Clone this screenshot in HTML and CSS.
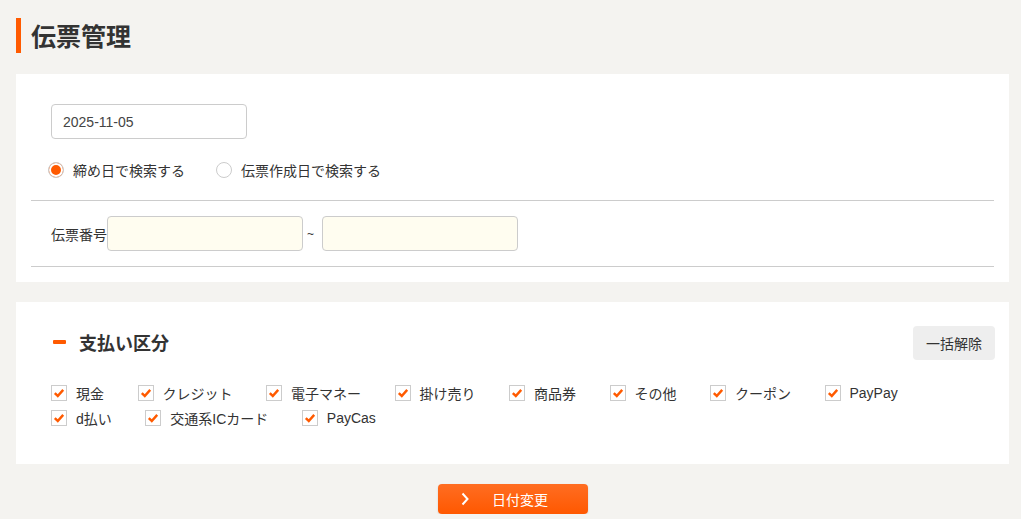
FILE: index.html
```html
<!DOCTYPE html>
<html lang="ja">
<head>
<meta charset="utf-8">
<title>伝票管理</title>
<link rel="stylesheet" href="styles.css">
</head>
<body>
<div class="page">
  <h1 class="page-title">伝票管理</h1>

  <section class="panel panel-search">
    <div class="block">
      <input class="text-input date-input" type="text" value="2025-11-05">
      <div class="radio-row">
        <label class="radio"><span class="radio-mark checked"></span>締め日で検索する</label>
        <label class="radio"><span class="radio-mark"></span>伝票作成日で検索する</label>
      </div>
    </div>
    <div class="divider"></div>
    <div class="block range-row">
      <span class="range-label">伝票番号</span>
      <input class="text-input range-input" type="text">
      <span class="tilde">~</span>
      <input class="text-input range-input" type="text">
    </div>
    <div class="divider"></div>
  </section>

  <section class="panel panel-pay">
    <div class="pay-head">
      <h2 class="section-title"><span class="minus"></span>支払い区分</h2>
      <button class="clear-btn" type="button">一括解除</button>
    </div>
    <div class="check-list">
      <label class="check"><span class="box"><svg viewBox="0 0 16 16"><path d="M3.2 8.2 L6.6 11.4 L12.8 4.4" fill="none" stroke="#ff5a00" stroke-width="2.8"/></svg></span>現金</label>
      <label class="check"><span class="box"><svg viewBox="0 0 16 16"><path d="M3.2 8.2 L6.6 11.4 L12.8 4.4" fill="none" stroke="#ff5a00" stroke-width="2.8"/></svg></span>クレジット</label>
      <label class="check"><span class="box"><svg viewBox="0 0 16 16"><path d="M3.2 8.2 L6.6 11.4 L12.8 4.4" fill="none" stroke="#ff5a00" stroke-width="2.8"/></svg></span>電子マネー</label>
      <label class="check"><span class="box"><svg viewBox="0 0 16 16"><path d="M3.2 8.2 L6.6 11.4 L12.8 4.4" fill="none" stroke="#ff5a00" stroke-width="2.8"/></svg></span>掛け売り</label>
      <label class="check"><span class="box"><svg viewBox="0 0 16 16"><path d="M3.2 8.2 L6.6 11.4 L12.8 4.4" fill="none" stroke="#ff5a00" stroke-width="2.8"/></svg></span>商品券</label>
      <label class="check"><span class="box"><svg viewBox="0 0 16 16"><path d="M3.2 8.2 L6.6 11.4 L12.8 4.4" fill="none" stroke="#ff5a00" stroke-width="2.8"/></svg></span>その他</label>
      <label class="check"><span class="box"><svg viewBox="0 0 16 16"><path d="M3.2 8.2 L6.6 11.4 L12.8 4.4" fill="none" stroke="#ff5a00" stroke-width="2.8"/></svg></span>クーポン</label>
      <label class="check"><span class="box"><svg viewBox="0 0 16 16"><path d="M3.2 8.2 L6.6 11.4 L12.8 4.4" fill="none" stroke="#ff5a00" stroke-width="2.8"/></svg></span>PayPay</label>
      <label class="check"><span class="box"><svg viewBox="0 0 16 16"><path d="M3.2 8.2 L6.6 11.4 L12.8 4.4" fill="none" stroke="#ff5a00" stroke-width="2.8"/></svg></span>d払い</label>
      <label class="check"><span class="box"><svg viewBox="0 0 16 16"><path d="M3.2 8.2 L6.6 11.4 L12.8 4.4" fill="none" stroke="#ff5a00" stroke-width="2.8"/></svg></span>交通系ICカード</label>
      <label class="check"><span class="box"><svg viewBox="0 0 16 16"><path d="M3.2 8.2 L6.6 11.4 L12.8 4.4" fill="none" stroke="#ff5a00" stroke-width="2.8"/></svg></span>PayCas</label>
    </div>
  </section>

  <div class="actions">
    <button class="primary-btn" type="button">
      <svg class="chev" viewBox="0 0 10 14"><path d="M2.5 1.5 L7.5 7 L2.5 12.5" fill="none" stroke="#fff" stroke-width="2"/></svg>
      <span>日付変更</span>
    </button>
  </div>
</div>
</body>
</html>
```

FILE: styles.css
```css
* { box-sizing: border-box; }
html, body { margin: 0; padding: 0; }
body {
  background: #f4f3f0;
  font-family: "Liberation Sans", "Noto Sans CJK JP", sans-serif;
  font-size: 14px;
  color: #333;
  overflow: hidden;
}
.page {
  padding: 18px 12px 0 16px;
}
.page-title {
  margin: 0 0 21px;
  height: 35px;
  line-height: 35px;
  border-left: 5px solid #ff5a00;
  padding-left: 10px;
  font-family: "Noto Sans CJK JP", sans-serif;
  font-size: 25px;
  font-weight: 700;
  color: #333;
}
.panel {
  background: #fff;
}
.panel-search {
  padding: 30px 15px 15px;
}
.block {
  padding-left: 20px;
}
.text-input {
  display: block;
  height: 35px;
  border: 1px solid #ccc;
  border-radius: 4px;
  font-family: "Liberation Sans", "Noto Sans CJK JP", sans-serif;
  font-size: 14px;
  color: #444;
  padding: 0 11px;
  outline: none;
}
.date-input {
  width: 196px;
  background: #fff;
}
.radio-row {
  display: flex;
  gap: 31px;
  margin: 22px 0 0 -3px;
  height: 17px;
  align-items: center;
}
.radio {
  display: flex;
  align-items: center;
  gap: 9px;
  font-family: "Noto Sans CJK JP", sans-serif;
  font-size: 14px;
  color: #333;
}
.radio-mark {
  width: 16px;
  height: 16px;
  border-radius: 50%;
  border: 1px solid #ccc;
  background: #fff;
}
.radio-mark.checked {
  background: #ff5a00;
  box-shadow: inset 0 0 0 2px #fff;
  border-color: #ccc;
}
.divider {
  height: 1px;
  background: #ccc;
  margin-top: 22px;
}
.range-row {
  display: flex;
  align-items: center;
  padding-top: 15px;
  padding-bottom: 15px;
}
.range-row + .divider { margin-top: 0; }
.range-label {
  font-family: "Noto Sans CJK JP", sans-serif;
  color: #333;
}
.range-input {
  width: 196px;
  background: #fffdf0;
}
.tilde {
  width: 19px;
  padding-left: 4px;
  font-size: 12px;
}
.panel-pay {
  margin-top: 20px;
  padding: 24px 14px 34px 35px;
}
.pay-head {
  display: flex;
  justify-content: space-between;
  align-items: center;
  height: 34px;
}
.section-title {
  margin: 0 0 3px;
  display: flex;
  align-items: center;
  font-family: "Noto Sans CJK JP", sans-serif;
  font-size: 18px;
  line-height: 24px;
  font-weight: 700;
  color: #333;
}
.minus {
  width: 13px;
  height: 4px;
  background: #ff5a00;
  border-radius: 1px;
  margin: 0 13px 0 2px;
}
.clear-btn {
  width: 82px;
  height: 34px;
  border: none;
  border-radius: 4px;
  background: #eeeeee;
  font-family: "Noto Sans CJK JP", sans-serif;
  font-size: 14px;
  color: #333;
  padding: 0;
}
.check-list {
  display: flex;
  flex-wrap: wrap;
  margin-top: 20px;
  padding-right: 12px;
  column-gap: 33.5px;
}
.check {
  display: flex;
  align-items: center;
  height: 25px;
  gap: 9px;
  font-family: "Liberation Sans", "Noto Sans CJK JP", sans-serif;
  font-size: 14px;
  color: #333;
}
.box {
  width: 16px;
  height: 16px;
  border: 1px solid #ccc;
  background: #fff;
  display: flex;
}
.box svg { width: 14px; height: 14px; }
.actions {
  display: flex;
  justify-content: center;
  margin-top: 20px;
}
.primary-btn {
  position: relative;
  width: 150px;
  height: 30px;
  border: none;
  border-radius: 4px;
  background: linear-gradient(#ff6d22, #ff5800);
  color: #fff;
  font-family: "Noto Sans CJK JP", sans-serif;
  font-size: 14px;
  display: flex;
  align-items: center;
  justify-content: center;
  padding: 0 0 0 15px;
  box-shadow: 0 1px 2px rgba(0,0,0,0.15);
}
.chev {
  position: absolute;
  left: 22px;
  top: 8px;
  width: 10px;
  height: 14px;
}
```
